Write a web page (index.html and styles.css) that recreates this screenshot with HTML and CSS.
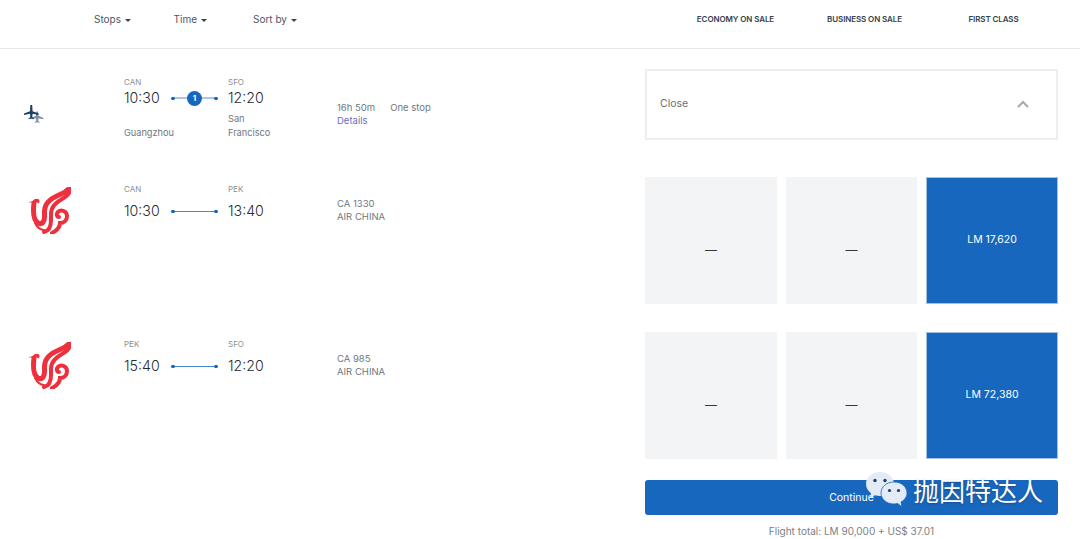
FILE: index.html
```html
<!DOCTYPE html>
<html lang="en">
<head>
  <meta charset="UTF-8" />
  <meta name="viewport" content="width=device-width, initial-scale=1.0"/>
  <title>Flight results</title>
  <link rel="stylesheet" href="styles.css">
</head>
<body>

  <header class="topbar">
    <nav class="filters">
      <span class="filter filter-stops">Stops <i class="caret"></i></span>
      <span class="filter filter-time">Time <i class="caret"></i></span>
      <span class="filter">Sort by <i class="caret"></i></span>
    </nav>
    <div class="cabins">
      <span class="cabin">ECONOMY ON SALE</span>
      <span class="cabin">BUSINESS ON SALE</span>
      <span class="cabin">FIRST CLASS</span>
    </div>
  </header>

  <section class="row row-summary">
    <div class="logo-cell">
      <svg class="planes" viewBox="0 0 20 20" width="20" height="20">
        <path fill="#7d8fa3" d="M12.300 7.600h1.800l.3 4.200 5 2.100v1.300l-5-1-.2 2.800 1.400 1v.8l-2.400-.6-2.400.6v-.8l1.400-1-.2-2.800-4.600 1v-1.300l4.600-2.100z"/>
        <path fill="#1f3f66" d="M6.300 1h1.900l.4 6.200 6 2.300v1.400l-6-1.200-.3 3.500 1.600 1.100v.9l-2.600-.6-2.600.6v-.9l1.600-1.100-.3-3.500-6 1.200V9.500l6-2.300z"/>
      </svg>
    </div>
    <div class="itinerary">
      <div class="code">CAN</div>
      <div></div>
      <div class="code code-to">SFO</div>
      <div class="time">10:30</div>
      <div class="route route-stop"><span class="stop-badge">1</span></div>
      <div class="time time-to">12:20</div>
      <div class="city">Guangzhou</div>
      <div></div>
      <div class="city city-to">San Francisco</div>
    </div>
    <div class="info info-summary">
      <div><span class="duration">16h 50m</span>One stop</div>
      <a class="details" href="#">Details</a>
    </div>
    <div class="close-box">
      <span>Close</span>
      <svg class="chevron" viewBox="0 0 12 8" width="12" height="8">
        <path d="M1 7l5-5 5 5" fill="none" stroke="#a9a9a9" stroke-width="2"/>
      </svg>
    </div>
  </section>

  <section class="row row-flight">
    <div class="logo-cell">
      <svg class="airline-logo" viewBox="0 0 43 47" width="43" height="47">
        <use href="#phoenix"/>
      </svg>
    </div>
    <div class="itinerary">
      <div class="code">CAN</div>
      <div></div>
      <div class="code code-to">PEK</div>
      <div class="time">10:30</div>
      <div class="route"></div>
      <div class="time time-to">13:40</div>
    </div>
    <div class="info">
      <div>CA 1330</div>
      <div>AIR CHINA</div>
    </div>
    <div class="fares">
      <div class="fare fare-closed">—</div>
      <div class="fare fare-closed">—</div>
      <div class="fare fare-open">LM 17,620</div>
    </div>
  </section>

  <section class="row row-flight">
    <div class="logo-cell">
      <svg class="airline-logo" viewBox="0 0 43 47" width="43" height="47">
        <use href="#phoenix"/>
      </svg>
    </div>
    <div class="itinerary">
      <div class="code">PEK</div>
      <div></div>
      <div class="code code-to">SFO</div>
      <div class="time">15:40</div>
      <div class="route"></div>
      <div class="time time-to">12:20</div>
    </div>
    <div class="info">
      <div>CA 985</div>
      <div>AIR CHINA</div>
    </div>
    <div class="fares">
      <div class="fare fare-closed">—</div>
      <div class="fare fare-closed">—</div>
      <div class="fare fare-open">LM 72,380</div>
    </div>
  </section>

  <section class="checkout">
    <button class="continue">Continue</button>
    <p class="total">Flight total: LM 90,000 + US$ 37.01</p>
  </section>

  <!-- account watermark over the button -->
  <div class="watermark">
    <svg viewBox="0 0 44 36" width="44" height="36">
      <path fill="#e3ebf6" d="M15 0C7 0 1 5.300 1 12c0 3.800 2 7 5 9.200L5 26l5-2.800c1.600.5 3.300.8 5 .8 8 0 14-5.300 14-12S23 0 15 0z"/>
      <path fill="#e3ebf6" stroke="#1767bf" stroke-width=".8" d="M29 10c-7.500 0-13 4.800-13 11s5.500 11 13 11c1.300 0 2.500-.2 3.700-.5L37 35l-1-5c3.600-2 6-5.300 6-9 0-6.200-5.500-11-13-11z"/>
      <circle cx="10" cy="8.500" r="1.700" fill="#1f3f66"/>
      <circle cx="20" cy="8.500" r="1.700" fill="#1f3f66"/>
      <circle cx="24.500" cy="18.500" r="1.600" fill="#1f3f66"/>
      <circle cx="33.500" cy="18.500" r="1.600" fill="#1f3f66"/>
    </svg>
    <span class="watermark-text">抛因特达人</span>
  </div>

  <svg class="defs" width="0" height="0">
    <symbol id="phoenix" viewBox="0 0 43 47">
      <g fill="none" stroke="#ee2f3c" stroke-linecap="round">
        <path stroke-width="5" d="M6 16C5 24 5 33 10 36c4 2 6.500-1 6.500-6v-6c.5-10 9.500-14 16.500-17 4-1.500 7-4 9-6.500"/>
        <path stroke-width="4" d="M16 45c5-1 7-5 7-12v-6c0-8 6-12 11-15 3-1.500 6-4 7.500-7"/>
        <path stroke-width="4" d="M24 46c6-3 8-7 8-10 4 0 7-3 7-7 0-5-6-7-9-4-2 2-1 5 1 5"/>
        <path stroke-width="2" d="M7 36c2 4 5 7 9 7"/>
      </g>
      <path fill="#ee2f3c" d="M0 15.500l5-1.500c1-2 4-3 6-1.500 1 1 .5 3-.5 4-1-1-3-1.500-5-1z"/>
    </symbol>
  </svg>

</body>
</html>
```

FILE: styles.css
```css
* {
  box-sizing: border-box;
}

body {
  margin: 0;
  font-family: 'Inter', 'Noto Sans', sans-serif;
  font-size: 10px;
  color: #6f7780;
  background: #fff;
  height: 539px;
  overflow: hidden;
  position: relative;
}

.topbar {
  height: 49px;
  border-bottom: 1px solid #e6e8ea;
  display: flex;
  justify-content: space-between;
  padding: 13px 0 0 94px;
}

.filters {
  display: flex;
}

.filter {
  font-size: 10px;
  color: #4d5863;
  width: 79.500px;
  line-height: 12px;
}

.caret {
  display: inline-block;
  margin-left: 1px;
  vertical-align: 1px;
  border-left: 3px solid transparent;
  border-right: 3px solid transparent;
  border-top: 3px solid #36424e;
}

.cabins {
  display: flex;
  width: 387px;
  margin-right: 22px;
}

.cabin {
  flex: 1;
  text-align: center;
  font-size: 8px;
  font-weight: 600;
  letter-spacing: -0.1px;
  color: #36424e;
  line-height: 12px;
}

.row {
  display: grid;
  grid-template-columns: 124px 213px 308px 413px;
}

.row-summary {
  margin-top: 20px;
  height: 70px;
}

.row-flight {
  height: 127px;
}

.row-summary + .row-flight {
  margin-top: 38px;
}

.row-flight + .row-flight {
  margin-top: 28px;
}

.logo-cell {
  display: flex;
}

.planes {
  margin: 35px 0 0 24px;
}

.airline-logo {
  margin: 10px 0 0 28px;
}

.itinerary {
  display: grid;
  grid-template-columns: 47px 47px 60px;
  grid-template-rows: 10px auto auto;
  align-content: start;
  padding-top: 8px;
}

.row-flight .itinerary {
  padding-top: 7px;
  row-gap: 6px;
}

.code {
  font-size: 8px;
  line-height: 10px;
  color: #8b8f94;
}

.code-to,
.time-to,
.city-to {
  margin-left: 10px;
}

.time {
  font-size: 14.200px;
  line-height: 21px;
  font-weight: 300;
  color: #262c33;
}

.city {
  align-self: end;
  font-size: 9.200px;
  line-height: 14px;
  margin-top: 4px;
}

.route {
  position: relative;
  height: 21px;
}

.route::before {
  content: "";
  position: absolute;
  left: 2px;
  right: 2px;
  top: 11px;
  height: 1px;
  background: #4a86d0;
}

.route-stop::before {
  background: #a9c6ea;
  height: 2px;
  top: 10px;
}

.route::after {
  content: "";
  position: absolute;
  left: 0;
  right: 0;
  top: 9px;
  height: 5px;
  background:
    radial-gradient(circle at 2px 2.500px, #1767bf 1.600px, transparent 2px),
    radial-gradient(circle at 45px 2.500px, #1767bf 1.600px, transparent 2px);
}

.stop-badge {
  position: absolute;
  left: 16px;
  top: 4px;
  width: 15px;
  height: 15px;
  border-radius: 50%;
  background: #1767bf;
  color: #fff;
  font-size: 8px;
  font-weight: 700;
  line-height: 15px;
  text-align: center;
  z-index: 1;
}

.info {
  font-size: 9.500px;
  line-height: 13px;
  padding-top: 20px;
}

.info-summary {
  padding-top: 32px;
}

.duration {
  margin-right: 15px;
}

.details {
  color: #6a6fc0;
  text-decoration: none;
}

.close-box {
  width: 413px;
  border: 2px solid #eeeeee;
  display: flex;
  justify-content: space-between;
  align-items: center;
  padding: 0 27px 2px 13px;
  font-size: 10.500px;
  color: #6a6f75;
}

.fares {
  display: grid;
  grid-template-columns: 132px 131px 132px;
  column-gap: 9px;
}

.fare {
  background: #f3f4f6;
  display: flex;
  align-items: center;
  justify-content: center;
  font-size: 12px;
  color: #333a42;
}

.fare-closed {
  padding-top: 17px;
}

.fare-open {
  background: #1767bf;
  border: 1px solid #a3c0e6;
  color: #fff;
  font-size: 10.500px;
  padding-bottom: 2px;
}

.checkout {
  margin: 21px 22px 0 645px;
}

.continue {
  display: block;
  width: 100%;
  height: 35px;
  border: none;
  border-radius: 3px;
  background: #1767bf;
  color: #fff;
  font-family: inherit;
  font-size: 10.500px;
}

.total {
  margin: 9px 0 0;
  text-align: center;
  font-size: 10px;
  line-height: 14px;
  color: #7a7f85;
}

.watermark {
  position: absolute;
  left: 865px;
  top: 472px;
  display: flex;
  align-items: flex-start;
  gap: 4px;
}

.watermark-text {
  font-family: 'Noto Sans CJK SC', sans-serif;
  font-size: 26px;
  line-height: 36px;
  color: #fff;
  text-shadow: 0 1px 2px rgba(40, 50, 60, 0.5);
}

.defs {
  position: absolute;
}
```
